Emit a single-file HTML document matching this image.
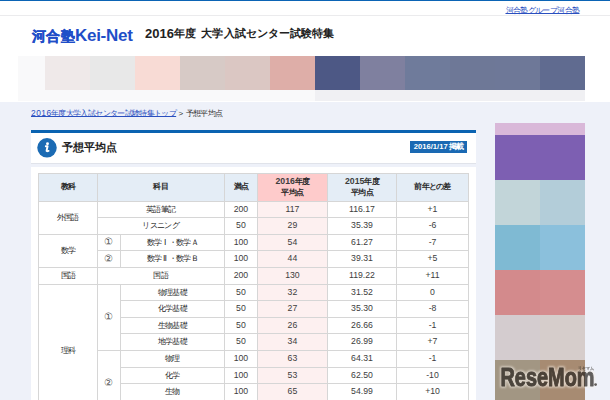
<!DOCTYPE html>
<html><head><meta charset="utf-8">
<style>
*{margin:0;padding:0;box-sizing:border-box}
html,body{width:610px;height:400px;overflow:hidden}
body{background:#eef1f9;font-family:"Liberation Sans",sans-serif;color:#333;position:relative}
.abs{position:absolute}
#hdr{left:0;top:0;width:610px;height:102px;background:#fff}
#topline{left:0;top:0;width:610px;height:1px;background:#0b64b5}
#grayline{left:0;top:14.5px;width:610px;height:1px;background:#ebebed}
#grp{left:505.5px;top:4.6px;text-underline-offset:0px;text-decoration-skip-ink:none;font-size:8px;letter-spacing:-0.62px;color:#2a4fbf;text-decoration:underline;white-space:nowrap}
#logo{left:32px;top:26px;font-size:17px;font-weight:bold;color:#1f4ec8;white-space:nowrap}
#lj{font-size:14px;letter-spacing:0.33px;-webkit-text-stroke:0.35px #1f4ec8}
#le{font-size:17px;letter-spacing:-0.28px}
#title{left:145px;top:26px;font-size:13px;font-weight:bold;color:#222;white-space:nowrap}
.tj{font-size:11px;letter-spacing:0.1px;position:relative;top:-0.8px}
.blk{position:absolute;top:56px;height:34px;width:45px}
#imgbg{left:18px;top:56px;width:567px;height:45px;background:#f9f9fa}
#crumb{left:31px;top:107.5px;font-size:8px;color:#2a4fbf;white-space:nowrap}
#crumb u{text-decoration:underline;text-underline-offset:0px;text-decoration-skip-ink:none}
#cd{font-size:8.4px;letter-spacing:0.5px}
#cjj{font-size:8px;letter-spacing:-0.64px;margin-left:-0.6px}
#crumb #cr{color:#333;letter-spacing:0}
#cj{font-size:8px;letter-spacing:-0.72px;margin-left:0.6px}
#panel{left:30.5px;top:130px;width:445.5px;height:33.5px;background:#fff;border-top:3px solid #0a63b1;border-bottom:1px solid #e0e3ea}
#icon{left:37px;top:138px;width:20px;height:20px;border-radius:50%;background:#1b63b4;color:#fff;font-family:"Liberation Serif",serif;font-style:italic;font-weight:bold;font-size:14px;text-align:center;line-height:20px}
#ptitle{left:62px;top:140px;font-size:11px;font-weight:bold;color:#222;white-space:nowrap}
#date{left:409.8px;top:141px;width:57.3px;height:11.7px;background:#1a69b3;color:#fff;font-size:7.6px;font-weight:bold;text-align:center;line-height:11.7px;white-space:nowrap}
#dj{font-size:8px;letter-spacing:-0.8px;margin-left:1px}
#tbox{left:30.5px;top:166.5px;width:445.5px;height:240px;background:#fff}
.a{position:absolute}
.c,.h{position:absolute;display:flex;align-items:center;justify-content:center;text-align:center;font-size:8.7px;color:#3d3d3d;line-height:1.35;white-space:nowrap;padding-top:0.5px}
.j{font-size:8px;letter-spacing:-0.7px;color:#262626}
.k{font-size:9.5px;color:#555}
.w{display:inline-block;width:7.3px;text-align:center;letter-spacing:0}
.h{font-weight:bold}
#side{left:495px;top:123px;width:90px;height:280px}
</style></head><body>
<div id="hdr" class="abs"></div>
<div id="topline" class="abs"></div>
<div id="grayline" class="abs"></div>
<div id="grp" class="abs">河合塾グループ河合塾</div>
<div id="logo" class="abs"><span id="lj">河合塾</span><span id="le">Kei-Net</span></div>
<div id="title" class="abs"><span id="t1">2016</span><span class="tj">年度</span> <span id="t2" class="tj" style="margin-left:1.6px">大学入試センター試験特集</span></div>
<div id="imgbg" class="abs"></div>
<div class="a" style="left:315px;top:90px;width:270px;height:11px;background:#f0f0f3"></div>
<div class="blk" style="left:45px;background:#efe9e9"></div>
<div class="blk" style="left:90px;background:#e8e8e8"></div>
<div class="blk" style="left:135px;background:#f8dbd5"></div>
<div class="blk" style="left:180px;background:#d7cac6"></div>
<div class="blk" style="left:225px;background:#dbc7c3"></div>
<div class="blk" style="left:270px;background:#deaea8"></div>
<div class="blk" style="left:315px;background:#4d5885"></div>
<div class="blk" style="left:360px;background:#7f809f"></div>
<div class="blk" style="left:405px;background:#6f7b9b"></div>
<div class="blk" style="left:450px;background:#6e7897"></div>
<div class="blk" style="left:495px;background:#6e7898"></div>
<div class="blk" style="left:540px;background:#606b90"></div>
<div id="crumb" class="abs"><u id="cl"><span id="cd">2016</span><span id="cjj">年度大学入試センター試験特集トップ</span></u><span id="cr"> &gt; <span id="cj">予想平均点</span></span></div>
<div id="panel" class="abs"></div>
<svg class="a" style="left:34px;top:135px" width="26" height="26" viewBox="0 0 26 26"><circle cx="13" cy="12.8" r="9.75" fill="#1b6bb4"/><circle cx="13.5" cy="8.8" r="1.45" fill="#fff"/><path d="M11.8,11.3 H13.6 L12.6,15.4 Q12.3,16.7 14.6,15.9" fill="none" stroke="#fff" stroke-width="1.9" stroke-linejoin="round" stroke-linecap="round"/></svg>
<div id="ptitle" class="abs">予想平均点</div>
<div id="date" class="abs"><span id="dd">2016/1/17</span><span id="dj">掲載</span></div>
<div id="tbox" class="abs"></div>
<!--T-->
<div class="a" style="left:38.5px;top:173.2px;width:430.0px;height:27.80000000000001px;background:#e4edf6"></div>
<div class="a" style="left:257.5px;top:173.2px;width:69.89999999999998px;height:27.80000000000001px;background:#fecbcb"></div>
<div class="a" style="left:257.5px;top:201.0px;width:69.89999999999998px;height:215.8px;background:#fdf0f0"></div>
<div class="a" style="left:38.5px;top:172.7px;width:430.5px;height:1px;background:#d6d6d6"></div>
<div class="a" style="left:38.5px;top:200.5px;width:430.5px;height:1px;background:#d6d6d6"></div>
<div class="a" style="left:97.2px;top:217.1px;width:371.8px;height:1px;background:#d6d6d6"></div>
<div class="a" style="left:38.5px;top:233.7px;width:430.5px;height:1px;background:#d6d6d6"></div>
<div class="a" style="left:97.2px;top:250.3px;width:371.8px;height:1px;background:#d6d6d6"></div>
<div class="a" style="left:38.5px;top:266.9px;width:430.5px;height:1px;background:#d6d6d6"></div>
<div class="a" style="left:38.5px;top:283.5px;width:430.5px;height:1px;background:#d6d6d6"></div>
<div class="a" style="left:120.4px;top:300.1px;width:348.6px;height:1px;background:#d6d6d6"></div>
<div class="a" style="left:120.4px;top:316.70000000000005px;width:348.6px;height:1px;background:#d6d6d6"></div>
<div class="a" style="left:120.4px;top:333.3px;width:348.6px;height:1px;background:#d6d6d6"></div>
<div class="a" style="left:97.2px;top:349.9px;width:371.8px;height:1px;background:#d6d6d6"></div>
<div class="a" style="left:120.4px;top:366.5px;width:348.6px;height:1px;background:#d6d6d6"></div>
<div class="a" style="left:120.4px;top:383.1px;width:348.6px;height:1px;background:#d6d6d6"></div>
<div class="a" style="left:120.4px;top:399.70000000000005px;width:348.6px;height:1px;background:#d6d6d6"></div>
<div class="a" style="left:38.0px;top:173.2px;width:1px;height:226.8px;background:#d6d6d6"></div>
<div class="a" style="left:468.0px;top:173.2px;width:1px;height:226.8px;background:#d6d6d6"></div>
<div class="a" style="left:96.7px;top:173.2px;width:1px;height:226.8px;background:#d6d6d6"></div>
<div class="a" style="left:223.8px;top:173.2px;width:1px;height:226.8px;background:#d6d6d6"></div>
<div class="a" style="left:257.0px;top:173.2px;width:1px;height:226.8px;background:#d6d6d6"></div>
<div class="a" style="left:326.9px;top:173.2px;width:1px;height:226.8px;background:#d6d6d6"></div>
<div class="a" style="left:396.0px;top:173.2px;width:1px;height:226.8px;background:#d6d6d6"></div>
<div class="a" style="left:119.9px;top:234.2px;width:1px;height:33.19999999999999px;background:#d6d6d6"></div>
<div class="a" style="left:119.9px;top:284.0px;width:1px;height:116.0px;background:#d6d6d6"></div>
<div class="h" style="left:38.5px;top:173.2px;width:58.7px;height:27.80000000000001px"><div><span class="j">教科</span></div></div>
<div class="h" style="left:97.2px;top:173.2px;width:127.10000000000001px;height:27.80000000000001px"><div><span class="j">科目</span></div></div>
<div class="h" style="left:224.3px;top:173.2px;width:33.19999999999999px;height:27.80000000000001px"><div><span class="j">満点</span></div></div>
<div class="h" style="left:257.5px;top:173.2px;width:69.89999999999998px;height:27.80000000000001px"><div>2016<span class="j">年度</span><br><span class="j">平均点</span></div></div>
<div class="h" style="left:327.4px;top:173.2px;width:69.10000000000002px;height:27.80000000000001px"><div>2015<span class="j">年度</span><br><span class="j">平均点</span></div></div>
<div class="h" style="left:396.5px;top:173.2px;width:72.0px;height:27.80000000000001px"><div><span class="j">前年との差</span></div></div>
<div class="c" style="left:97.2px;top:201.0px;width:127.10000000000001px;height:16.599999999999994px"><div><span class="j">英語筆記</span></div></div>
<div class="c" style="left:224.3px;top:201.0px;width:33.19999999999999px;height:16.599999999999994px"><div>200</div></div>
<div class="c" style="left:257.5px;top:201.0px;width:69.89999999999998px;height:16.599999999999994px"><div>117</div></div>
<div class="c" style="left:327.4px;top:201.0px;width:69.10000000000002px;height:16.599999999999994px"><div>116.17</div></div>
<div class="c" style="left:396.5px;top:201.0px;width:72.0px;height:16.599999999999994px"><div>+1</div></div>
<div class="c" style="left:97.2px;top:217.6px;width:127.10000000000001px;height:16.599999999999994px"><div><span class="j">リスニング</span></div></div>
<div class="c" style="left:224.3px;top:217.6px;width:33.19999999999999px;height:16.599999999999994px"><div>50</div></div>
<div class="c" style="left:257.5px;top:217.6px;width:69.89999999999998px;height:16.599999999999994px"><div>29</div></div>
<div class="c" style="left:327.4px;top:217.6px;width:69.10000000000002px;height:16.599999999999994px"><div>35.39</div></div>
<div class="c" style="left:396.5px;top:217.6px;width:72.0px;height:16.599999999999994px"><div>-6</div></div>
<div class="c" style="left:120.4px;top:234.2px;width:103.9px;height:16.600000000000023px"><div><span class="j">数学<span class="w">Ⅰ</span><span class="w">・</span>数学<span class="w">Ａ</span></span></div></div>
<div class="c" style="left:224.3px;top:234.2px;width:33.19999999999999px;height:16.600000000000023px"><div>100</div></div>
<div class="c" style="left:257.5px;top:234.2px;width:69.89999999999998px;height:16.600000000000023px"><div>54</div></div>
<div class="c" style="left:327.4px;top:234.2px;width:69.10000000000002px;height:16.600000000000023px"><div>61.27</div></div>
<div class="c" style="left:396.5px;top:234.2px;width:72.0px;height:16.600000000000023px"><div>-7</div></div>
<div class="c" style="left:120.4px;top:250.8px;width:103.9px;height:16.599999999999966px"><div><span class="j">数学<span class="w">Ⅱ</span><span class="w">・</span>数学<span class="w">Ｂ</span></span></div></div>
<div class="c" style="left:224.3px;top:250.8px;width:33.19999999999999px;height:16.599999999999966px"><div>100</div></div>
<div class="c" style="left:257.5px;top:250.8px;width:69.89999999999998px;height:16.599999999999966px"><div>44</div></div>
<div class="c" style="left:327.4px;top:250.8px;width:69.10000000000002px;height:16.599999999999966px"><div>39.31</div></div>
<div class="c" style="left:396.5px;top:250.8px;width:72.0px;height:16.599999999999966px"><div>+5</div></div>
<div class="c" style="left:97.2px;top:267.4px;width:127.10000000000001px;height:16.600000000000023px"><div><span class="j">国語</span></div></div>
<div class="c" style="left:224.3px;top:267.4px;width:33.19999999999999px;height:16.600000000000023px"><div>200</div></div>
<div class="c" style="left:257.5px;top:267.4px;width:69.89999999999998px;height:16.600000000000023px"><div>130</div></div>
<div class="c" style="left:327.4px;top:267.4px;width:69.10000000000002px;height:16.600000000000023px"><div>119.22</div></div>
<div class="c" style="left:396.5px;top:267.4px;width:72.0px;height:16.600000000000023px"><div>+11</div></div>
<div class="c" style="left:120.4px;top:284.0px;width:103.9px;height:16.600000000000023px"><div><span class="j">物理基礎</span></div></div>
<div class="c" style="left:224.3px;top:284.0px;width:33.19999999999999px;height:16.600000000000023px"><div>50</div></div>
<div class="c" style="left:257.5px;top:284.0px;width:69.89999999999998px;height:16.600000000000023px"><div>32</div></div>
<div class="c" style="left:327.4px;top:284.0px;width:69.10000000000002px;height:16.600000000000023px"><div>31.52</div></div>
<div class="c" style="left:396.5px;top:284.0px;width:72.0px;height:16.600000000000023px"><div>0</div></div>
<div class="c" style="left:120.4px;top:300.6px;width:103.9px;height:16.600000000000023px"><div><span class="j">化学基礎</span></div></div>
<div class="c" style="left:224.3px;top:300.6px;width:33.19999999999999px;height:16.600000000000023px"><div>50</div></div>
<div class="c" style="left:257.5px;top:300.6px;width:69.89999999999998px;height:16.600000000000023px"><div>27</div></div>
<div class="c" style="left:327.4px;top:300.6px;width:69.10000000000002px;height:16.600000000000023px"><div>35.30</div></div>
<div class="c" style="left:396.5px;top:300.6px;width:72.0px;height:16.600000000000023px"><div>-8</div></div>
<div class="c" style="left:120.4px;top:317.20000000000005px;width:103.9px;height:16.599999999999966px"><div><span class="j">生物基礎</span></div></div>
<div class="c" style="left:224.3px;top:317.20000000000005px;width:33.19999999999999px;height:16.599999999999966px"><div>50</div></div>
<div class="c" style="left:257.5px;top:317.20000000000005px;width:69.89999999999998px;height:16.599999999999966px"><div>26</div></div>
<div class="c" style="left:327.4px;top:317.20000000000005px;width:69.10000000000002px;height:16.599999999999966px"><div>26.66</div></div>
<div class="c" style="left:396.5px;top:317.20000000000005px;width:72.0px;height:16.599999999999966px"><div>-1</div></div>
<div class="c" style="left:120.4px;top:333.8px;width:103.9px;height:16.599999999999966px"><div><span class="j">地学基礎</span></div></div>
<div class="c" style="left:224.3px;top:333.8px;width:33.19999999999999px;height:16.599999999999966px"><div>50</div></div>
<div class="c" style="left:257.5px;top:333.8px;width:69.89999999999998px;height:16.599999999999966px"><div>34</div></div>
<div class="c" style="left:327.4px;top:333.8px;width:69.10000000000002px;height:16.599999999999966px"><div>26.99</div></div>
<div class="c" style="left:396.5px;top:333.8px;width:72.0px;height:16.599999999999966px"><div>+7</div></div>
<div class="c" style="left:120.4px;top:350.4px;width:103.9px;height:16.600000000000023px"><div><span class="j">物理</span></div></div>
<div class="c" style="left:224.3px;top:350.4px;width:33.19999999999999px;height:16.600000000000023px"><div>100</div></div>
<div class="c" style="left:257.5px;top:350.4px;width:69.89999999999998px;height:16.600000000000023px"><div>63</div></div>
<div class="c" style="left:327.4px;top:350.4px;width:69.10000000000002px;height:16.600000000000023px"><div>64.31</div></div>
<div class="c" style="left:396.5px;top:350.4px;width:72.0px;height:16.600000000000023px"><div>-1</div></div>
<div class="c" style="left:120.4px;top:367.0px;width:103.9px;height:16.600000000000023px"><div><span class="j">化学</span></div></div>
<div class="c" style="left:224.3px;top:367.0px;width:33.19999999999999px;height:16.600000000000023px"><div>100</div></div>
<div class="c" style="left:257.5px;top:367.0px;width:69.89999999999998px;height:16.600000000000023px"><div>53</div></div>
<div class="c" style="left:327.4px;top:367.0px;width:69.10000000000002px;height:16.600000000000023px"><div>62.50</div></div>
<div class="c" style="left:396.5px;top:367.0px;width:72.0px;height:16.600000000000023px"><div>-10</div></div>
<div class="c" style="left:120.4px;top:383.6px;width:103.9px;height:16.600000000000023px"><div><span class="j">生物</span></div></div>
<div class="c" style="left:224.3px;top:383.6px;width:33.19999999999999px;height:16.600000000000023px"><div>100</div></div>
<div class="c" style="left:257.5px;top:383.6px;width:69.89999999999998px;height:16.600000000000023px"><div>65</div></div>
<div class="c" style="left:327.4px;top:383.6px;width:69.10000000000002px;height:16.600000000000023px"><div>54.99</div></div>
<div class="c" style="left:396.5px;top:383.6px;width:72.0px;height:16.600000000000023px"><div>+10</div></div>
<div class="c" style="left:120.4px;top:400.20000000000005px;width:103.9px;height:16.599999999999966px"><div><span class="j">地学</span></div></div>
<div class="c" style="left:224.3px;top:400.20000000000005px;width:33.19999999999999px;height:16.599999999999966px"><div>100</div></div>
<div class="c" style="left:257.5px;top:400.20000000000005px;width:69.89999999999998px;height:16.599999999999966px"><div></div></div>
<div class="c" style="left:327.4px;top:400.20000000000005px;width:69.10000000000002px;height:16.599999999999966px"><div></div></div>
<div class="c" style="left:396.5px;top:400.20000000000005px;width:72.0px;height:16.599999999999966px"><div></div></div>
<div class="c" style="left:38.5px;top:201.0px;width:58.7px;height:33.19999999999999px"><div><span class="j">外国語</span></div></div>
<div class="c" style="left:38.5px;top:234.2px;width:58.7px;height:33.19999999999999px"><div><span class="j">数学</span></div></div>
<div class="c" style="left:38.5px;top:267.4px;width:58.7px;height:16.600000000000023px"><div><span class="j">国語</span></div></div>
<div class="c" style="left:38.5px;top:284.0px;width:58.7px;height:132.8px"><div><span class="j">理科</span></div></div>
<div class="c" style="left:97.2px;top:234.2px;width:23.200000000000003px;height:16.600000000000023px"><div><span class="k">①</span></div></div>
<div class="c" style="left:97.2px;top:250.8px;width:23.200000000000003px;height:16.599999999999966px"><div><span class="k">②</span></div></div>
<div class="c" style="left:97.2px;top:284.0px;width:23.200000000000003px;height:66.39999999999998px"><div><span class="k">①</span></div></div>
<div class="c" style="left:97.2px;top:350.4px;width:23.200000000000003px;height:66.40000000000003px"><div><span class="k">②</span></div></div>
<!--/T-->
<div class="a" style="left:495px;top:123px;width:90px;height:12px;background:#d9b8d9"></div>
<div class="a" style="left:495px;top:135px;width:90px;height:45px;background:#7d5fb2"></div>
<div class="a" style="left:495px;top:180px;width:45px;height:45px;background:#c2d5d9"></div>
<div class="a" style="left:540px;top:180px;width:45px;height:45px;background:#b3cdd9"></div>
<div class="a" style="left:495px;top:225px;width:45px;height:45px;background:#7fbad3"></div>
<div class="a" style="left:540px;top:225px;width:45px;height:45px;background:#8bc0dc"></div>
<div class="a" style="left:495px;top:270px;width:45px;height:45px;background:#d38a8c"></div>
<div class="a" style="left:540px;top:270px;width:45px;height:45px;background:#d58d8f"></div>
<div class="a" style="left:495px;top:315px;width:45px;height:45px;background:#d4cccf"></div>
<div class="a" style="left:540px;top:315px;width:45px;height:45px;background:#d6cdcb"></div>
<div class="a" style="left:495px;top:360px;width:45px;height:40px;background:#a29683"></div>
<div class="a" style="left:540px;top:360px;width:45px;height:40px;background:#a78b72"></div>
<svg class="a" style="left:490px;top:355px" width="120" height="45" viewBox="0 0 120 45">
<defs><filter id="glow" x="-20%" y="-40%" width="140%" height="180%"><feMorphology in="SourceAlpha" operator="dilate" radius="0.8" result="d"/><feGaussianBlur in="d" stdDeviation="1.1" result="b"/><feFlood flood-color="#f4eee6" flood-opacity="0.75"/><feComposite in2="b" operator="in" result="w"/><feComposite in="w" in2="SourceAlpha" operator="out"/></filter></defs>
<g filter="url(#glow)"><text x="10.5" y="31.3" font-family="Liberation Sans" font-weight="bold" font-size="25" stroke-width="0.9" stroke="#000" textLength="94" lengthAdjust="spacingAndGlyphs">ReseMom</text></g>
<g opacity="0.72"><text x="10.5" y="31.3" font-family="Liberation Sans" font-weight="bold" font-size="25" fill="#2a2622" stroke="#2a2622" stroke-width="0.9" stroke-linejoin="round" textLength="94" lengthAdjust="spacingAndGlyphs">ReseMom</text><circle cx="105.6" cy="29.6" r="1.4" fill="#2a2622"/>
<text x="88" y="14.6" font-family="Liberation Sans" font-weight="bold" font-size="4.6" fill="#2a2622" textLength="15.5" lengthAdjust="spacingAndGlyphs">リセマム</text></g>
</svg>
</body></html>
